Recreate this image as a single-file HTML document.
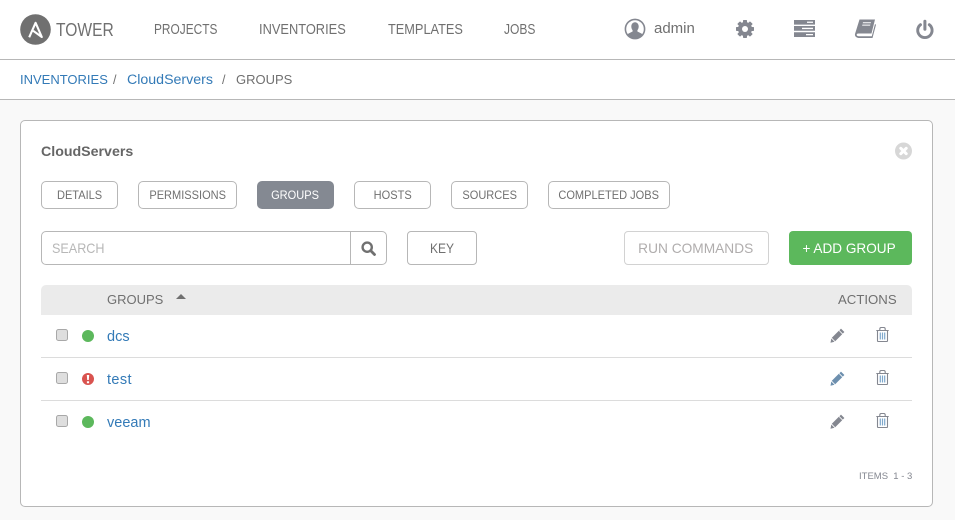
<!DOCTYPE html>
<html><head><meta charset="utf-8">
<style>
html,body{margin:0;padding:0}
body{width:955px;height:520px;overflow:hidden;position:relative;background:#f9f9f9;font-family:"Liberation Sans",sans-serif;color:#707070}
.a{position:absolute;white-space:nowrap}
.sx{transform-origin:0 50%}
.n{font-size:14.5px;line-height:20px;top:20px;color:#707070}
.b{font-size:12.5px;line-height:20px;top:70px}
.l{color:#337ab7}
.tab{position:absolute;top:181px;height:28px;box-sizing:border-box;border:1px solid #b7b7b7;border-radius:5px;background:#fff;font-size:12px;line-height:27px;text-align:center;color:#707070}
.tab span,.btn span{display:inline-block;white-space:nowrap}
.tab span{transform:scaleX(.92)}
.btn{position:absolute;top:231px;height:34px;box-sizing:border-box;border-radius:4px;font-size:14px;line-height:33px;text-align:center}
.hr{position:absolute;left:41px;width:871px;height:1px;background:#dcdcdc}
.cb{position:absolute;left:56px;width:12px;height:12px;box-sizing:border-box;border:1px solid #a8a8a8;border-radius:2.5px;background:#dedede}
.dot{position:absolute;left:82px;width:12px;height:12px;border-radius:50%;background:#5cb85c}
.row{font-size:14.5px;line-height:20px;color:#337ab7;left:107px}
svg{position:absolute;display:block}
</style></head><body>
<div class="a" style="left:0;top:0;width:955px;height:100px;background:#fff"></div>
<div class="a" style="left:0;top:59px;width:955px;height:1px;background:#b7b7b7"></div>
<div class="a" style="left:0;top:99px;width:955px;height:1px;background:#b7b7b7"></div>

<svg style="left:20px;top:14px" width="32" height="32" viewBox="0 0 32 32"><circle cx="15.500" cy="15.500" r="15.300" fill="#707070"/><path d="M9.200 23.300 L15.600 8.800 L21.800 23 L13.200 16.800" fill="none" stroke="#fff" stroke-width="2.100" stroke-linejoin="round"/></svg>
<div class="a sx" style="left:56px;top:18px;font-size:18px;line-height:24px;color:#707070;transform:scaleX(.866)">TOWER</div>
<div class="a n sx" style="left:154px;transform:scaleX(.82)">PROJECTS</div>
<div class="a n sx" style="left:259px;transform:scaleX(.885)">INVENTORIES</div>
<div class="a n sx" style="left:388px;transform:scaleX(.88)">TEMPLATES</div>
<div class="a n sx" style="left:504px;transform:scaleX(.83)">JOBS</div>

<svg style="left:624px;top:18px" width="22" height="22" viewBox="0 0 22 22"><circle cx="11" cy="11" r="9.600" fill="#fff" stroke="#848790" stroke-width="1.600"/><path d="M11 4.200c2.200 0 3.700 1.800 3.700 4.300 0 1.600-.6 2.900-1.300 3.700v1.300l3.800 1.900c.8.400 1.200 1 1.300 1.800A9.600 9.600 0 0 1 11 20.600 9.600 9.600 0 0 1 3.500 17.200c.1-.8.500-1.400 1.300-1.800l3.800-1.900v-1.300C7.900 11.400 7.300 10.100 7.300 8.500c0-2.500 1.500-4.300 3.700-4.300z" fill="#848790"/></svg>
<div class="a" style="left:654px;top:19px;font-size:15px;line-height:20px;color:#707070">admin</div>

<svg style="left:735px;top:19px" width="20" height="20" viewBox="0 0 20 20"><g fill="#848790"><rect x="8" y="1" width="4" height="18" rx=".7"/><rect x="8" y="1" width="4" height="18" rx=".7" transform="rotate(45 10 10)"/><rect x="8" y="1" width="4" height="18" rx=".7" transform="rotate(90 10 10)"/><rect x="8" y="1" width="4" height="18" rx=".7" transform="rotate(135 10 10)"/><circle cx="10" cy="10" r="7"/></g><circle cx="10" cy="10" r="3" fill="#fff"/></svg>

<svg style="left:794px;top:20px" width="21" height="17" viewBox="0 0 21 17"><path fill="#848790" d="M0 0h21v4.600H0zM0 6h21v4.800H0zM0 12.200h21V17H0z"/><path fill="#fff" d="M13 1.600h6v1.300h-6zM8 7.800h11v1.300H8zM12 14h7v1.300h-7z"/></svg>

<svg style="left:854px;top:19px" width="22" height="20" viewBox="0 0 22 20"><path fill="#848790" d="M5.500.5H21l-3.500 14H4.500c-1.500 0-2 .8-1.800 1.500.3.900 1 1.200 2.300 1.200h12.800l3.200-12.200 1 .7-3.500 13.300H4.500C2 18.500.6 17 1 15z"/><path fill="#fff" d="M9 3.300h8l-.3 1H8.700zM8.400 5.600h8l-.3 1H8.100z"/></svg>

<svg style="left:915px;top:19px" width="20" height="21" viewBox="0 0 20 21"><path d="M5.500 5.700a7.200 7.200 0 1 0 8.800 0" fill="none" stroke="#848790" stroke-width="2.900" stroke-linecap="round"/><path d="M9.900 2.300v8" stroke="#848790" stroke-width="3" stroke-linecap="round"/></svg>

<div class="a b l" style="left:20px;font-size:13px">INVENTORIES</div><div class="a b" style="left:113px">/</div>
<div class="a b l" style="left:127px;font-size:14.200px">CloudServers</div><div class="a b" style="left:222px">/</div>
<div class="a b" style="left:236px;font-size:13px;color:#707070">GROUPS</div>

<div class="a" style="left:20px;top:120px;width:913px;height:387px;box-sizing:border-box;background:#fff;border:1px solid #b7b7b7;border-radius:5px"></div>
<div class="a" style="left:41px;top:142px;font-size:14.200px;font-weight:bold;line-height:20px;color:#666">CloudServers</div>
<svg style="left:895px;top:142px" width="18" height="18" viewBox="0 0 18 18"><circle cx="8.500" cy="9" r="8.500" fill="#d7d7d7"/><path d="M5.800 6.300l5.400 5.400M11.200 6.300l-5.400 5.400" stroke="#fff" stroke-width="3" stroke-linecap="round"/></svg>

<div class="tab" style="left:41px;width:77px"><span>DETAILS</span></div>
<div class="tab" style="left:138px;width:99px"><span>PERMISSIONS</span></div>
<div class="tab" style="left:257px;width:77px;background:#848992;border-color:#848992;color:#fff"><span>GROUPS</span></div>
<div class="tab" style="left:354px;width:77px"><span>HOSTS</span></div>
<div class="tab" style="left:451px;width:77px"><span>SOURCES</span></div>
<div class="tab" style="left:548px;width:122px"><span>COMPLETED JOBS</span></div>

<div class="a" style="left:41px;top:231px;width:346px;height:34px;box-sizing:border-box;background:#fff;border:1px solid #b7b7b7;border-radius:5px"></div>
<div class="a" style="left:350px;top:232px;width:1px;height:32px;background:#b7b7b7"></div>
<div class="a sx" style="left:52px;top:238px;font-size:14px;line-height:20px;color:#b7b7b7;transform:scaleX(.9)">SEARCH</div>
<svg style="left:361px;top:241px" width="15" height="15" viewBox="0 0 15 15"><circle cx="6.200" cy="6.200" r="4.600" fill="none" stroke="#707070" stroke-width="2.400"/><path d="M9.800 9.800l3.700 3.700" stroke="#707070" stroke-width="2.800" stroke-linecap="round"/></svg>
<div class="btn" style="left:407px;width:70px;border:1px solid #b7b7b7;background:#fff;color:#707070"><span style="transform:scaleX(.86)">KEY</span></div>
<div class="btn" style="left:624px;width:145px;border:1px solid #d2d2d2;background:#fff;color:#b0adad;line-height:32px"><span style="transform:translateX(-1px) scaleX(.98)">RUN COMMANDS</span></div>
<div class="btn" style="left:789px;width:123px;background:#5cb85c;color:#fff;line-height:34px"><span style="transform:translateX(-1px) scaleX(.97)">+ ADD GROUP</span></div>

<div class="a" style="left:41px;top:285px;width:871px;height:30px;background:#ebebeb;border-radius:5px 5px 0 0"></div>
<div class="a" style="left:107px;top:290px;font-size:13px;line-height:20px;color:#707070">GROUPS</div>
<svg style="left:176px;top:294px" width="10" height="5" viewBox="0 0 10 5"><path d="M5 0l5 5H0z" fill="#707070"/></svg>
<div class="a" style="left:838px;top:290px;font-size:13.200px;line-height:20px;color:#707070">ACTIONS</div>

<div class="hr" style="top:357px"></div>
<div class="hr" style="top:400px"></div>

<div class="cb" style="top:329px"></div><div class="dot" style="top:330px"></div><div class="a row" style="top:327px">dcs</div>
<div class="cb" style="top:372px"></div><div class="dot" style="top:373px;background:#d9534f"></div>
<svg style="left:82px;top:373px" width="12" height="12" viewBox="0 0 12 12"><path d="M4.800 2h2.400l-.4 5H5.200zM4.900 8.200h2.200v2H4.900z" fill="#fff"/></svg>
<div class="a row" style="top:370px;letter-spacing:.4px">test</div>
<div class="cb" style="top:415px"></div><div class="dot" style="top:416px"></div><div class="a row" style="top:413px">veeam</div>

<svg style="left:830px;top:327.500px" width="15" height="15" viewBox="0 0 15 15"><path d="M11 .6l3.400 3.400-1.600 1.600-3.400-3.400zM8.800 2.800l3.400 3.400-7 7-3.400-3.400zM1.300 10.500l3.200 3.200-4 1z" fill="#848790"/></svg>
<svg style="left:830px;top:370.500px" width="15" height="15" viewBox="0 0 15 15"><path d="M11 .6l3.400 3.400-1.600 1.600-3.400-3.400zM8.800 2.800l3.400 3.400-7 7-3.400-3.400zM1.300 10.500l3.200 3.200-4 1z" fill="#6d8fae"/></svg>
<svg style="left:830px;top:413.500px" width="15" height="15" viewBox="0 0 15 15"><path d="M11 .6l3.400 3.400-1.600 1.600-3.400-3.400zM8.800 2.800l3.400 3.400-7 7-3.400-3.400zM1.300 10.500l3.200 3.200-4 1z" fill="#848790"/></svg>

<svg style="left:876px;top:327px" width="13" height="15" viewBox="0 0 13 15"><path d="M.3 3.500h12.400M1.500 3.500v10.200c0 .5.300.8.800.8h8.400c.5 0 .8-.3.800-.8V3.500M3.800 3.500V2c0-.9.600-1.500 1.500-1.500h2.400C8.600.5 9.200 1.100 9.200 2v1.500" fill="none" stroke="#848790" stroke-width="1.100"/><path d="M4.300 5.500v7M6.500 5.500v7M8.700 5.500v7" stroke="#7ea8cc" stroke-width="1.200"/></svg>
<svg style="left:876px;top:370px" width="13" height="15" viewBox="0 0 13 15"><path d="M.3 3.500h12.400M1.500 3.500v10.200c0 .5.300.8.800.8h8.400c.5 0 .8-.3.800-.8V3.500M3.800 3.500V2c0-.9.600-1.500 1.500-1.500h2.400C8.600.5 9.200 1.100 9.200 2v1.500" fill="none" stroke="#848790" stroke-width="1.100"/><path d="M4.300 5.500v7M6.500 5.500v7M8.700 5.500v7" stroke="#7ea8cc" stroke-width="1.200"/></svg>
<svg style="left:876px;top:413px" width="13" height="15" viewBox="0 0 13 15"><path d="M.3 3.500h12.400M1.500 3.500v10.200c0 .5.300.8.800.8h8.400c.5 0 .8-.3.800-.8V3.500M3.800 3.500V2c0-.9.600-1.500 1.500-1.500h2.400C8.600.5 9.200 1.100 9.200 2v1.500" fill="none" stroke="#848790" stroke-width="1.100"/><path d="M4.300 5.500v7M6.500 5.500v7M8.700 5.500v7" stroke="#7ea8cc" stroke-width="1.200"/></svg>

<div class="a" style="left:859px;top:470px;font-size:9.500px;line-height:14px;color:#848790">ITEMS &nbsp;1 - 3</div>
</body></html>
